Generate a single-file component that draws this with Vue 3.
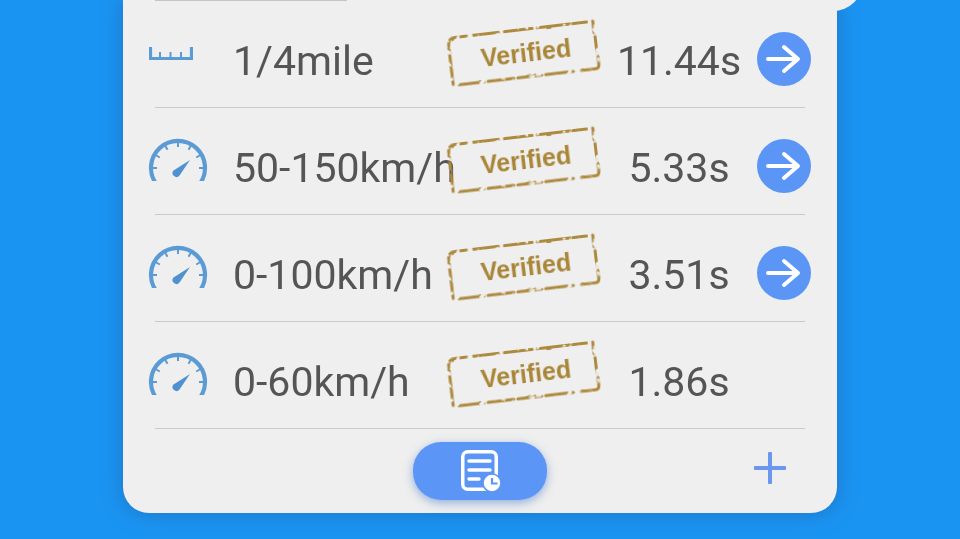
<script setup>
const rows = [
  { icon: 'ruler', label: '1/4mile', time: '11.44s', arrow: true },
  { icon: 'gauge', label: '50-150km/h', time: '5.33s', arrow: true },
  { icon: 'gauge', label: '0-100km/h', time: '3.51s', arrow: true },
  { icon: 'gauge', label: '0-60km/h', time: '1.86s', arrow: false },
]
const ticks = [-90, -60, -30, 0, 30, 60, 90]
</script>

<template>
  <div class="screen">
    <div class="card">
      <div class="top-line"></div>
      <div class="notch"></div>
      <div v-for="row in rows" :key="row.label" class="row">
        <div class="icon-cell">
          <svg v-if="row.icon === 'ruler'" class="ruler" width="44" height="14" viewBox="0 0 44 14">
            <path d="M1.500 0V11.500H42.500V0" fill="none" stroke="#5b9bd5" stroke-width="3.200" />
            <path d="M11 5V11M21.500 5V11M32 5V11" fill="none" stroke="#5b9bd5" stroke-width="2" />
          </svg>
          <svg v-else class="gauge" width="60" height="44" viewBox="0 0 60 44">
            <path d="M8.300 47A27 27 0 1 1 51.700 47" fill="none" stroke="#5b9bd5" stroke-width="4.200" />
            <g stroke="#5b9bd5" stroke-width="2">
              <line v-for="a in ticks" :key="a" x1="30" y1="5" x2="30" y2="10" :transform="`rotate(${a} 30 31)`" />
            </g>
            <path d="M25.500 33.500L42 23L31.500 38.500A3.800 3.800 0 0 1 25.500 33.500Z" fill="#4f92cf" />
          </svg>
        </div>
        <div class="label">{{ row.label }}</div>
        <svg class="stamp" width="158" height="72" viewBox="0 0 158 72">
          <defs>
            <filter id="worn" x="-5%" y="-10%" width="110%" height="120%" color-interpolation-filters="sRGB">
              <feTurbulence type="fractalNoise" baseFrequency="0.16" numOctaves="2" seed="4" result="n" />
              <feDisplacementMap in="SourceGraphic" in2="n" scale="2" xChannelSelector="R" yChannelSelector="G" result="d" />
              <feColorMatrix in="n" type="matrix" values="0 0 0 0 0  0 0 0 0 0  0 0 0 0 0  7 0 0 0 -1.900" result="t" />
              <feComposite in="d" in2="t" operator="in" />
            </filter>
            <filter id="rough" x="-5%" y="-10%" width="110%" height="120%" color-interpolation-filters="sRGB">
              <feTurbulence type="fractalNoise" baseFrequency="0.35" numOctaves="1" seed="7" result="n" />
              <feDisplacementMap in="SourceGraphic" in2="n" scale="1.200" xChannelSelector="R" yChannelSelector="G" />
            </filter>
          </defs>
          <g transform="rotate(-6.700 79 36)">
            <g fill="none" stroke="#ad8a3e" stroke-width="3" stroke-linecap="round" filter="url(#worn)">
              <path d="M5 20Q5 12.500 13 12.500H24M30 12.500H56M62 12.500H90M95 12.500H128M131 12.500H145" />
              <path d="M151 12V24M151.500 28V45M152 48V56Q152 60 148 60H134" />
              <path d="M126 60H98M94 60H70M66 60H40M36 60H12" />
              <path d="M5 22V59" />
            </g>
            <text x="81" y="45" text-anchor="middle" class="stamp-text" filter="url(#rough)">Verified</text>
          </g>
        </svg>
        <div class="time">{{ row.time }}</div>
        <div class="arrow-cell">
          <svg v-if="row.arrow" width="54" height="54" viewBox="0 0 54 54">
            <circle cx="27" cy="27" r="27" fill="#5b95f5" />
            <path d="M11 27H40M27 15L41 27L27 39" fill="none" stroke="#fff" stroke-width="4" stroke-linecap="round" stroke-linejoin="round" />
          </svg>
        </div>
      </div>
      <div class="footer">
        <div class="report-btn">
          <svg width="44" height="48" viewBox="0 0 44 48">
            <rect x="4.750" y="4.750" width="33.500" height="37.500" rx="5" fill="none" stroke="#fff" stroke-width="3.500" />
            <path d="M11 14H32M11 23H32M11 32H21" stroke="#fff" stroke-width="3.500" stroke-linecap="round" />
            <circle cx="34" cy="36" r="9" fill="#fff" stroke="#5b95f5" stroke-width="1.500" />
            <path d="M34 31V36.500H39.500" fill="none" stroke="#5b95f5" stroke-width="2.200" />
          </svg>
        </div>
        <svg class="plus" width="32" height="32" viewBox="0 0 32 32">
          <path d="M16 1.500V30.500M1.500 16H30.500" stroke="#6a98ee" stroke-width="4" stroke-linecap="round" />
        </svg>
      </div>
    </div>
  </div>
</template>

<style scoped>
.screen {
  width: 960px;
  height: 539px;
  overflow: hidden;
  background: #1a94f2;
  display: flex;
  justify-content: center;
  align-items: flex-start;
  font-family: Roboto, "Liberation Sans", sans-serif;
}
.card {
  position: relative;
  width: 714px;
  height: 513px;
  box-sizing: border-box;
  padding: 1px 32px 0;
  background: #efefef;
  border-radius: 0 0 26px 26px;
  box-shadow: 0 0 20px rgba(40, 85, 150, 0.5);
  filter: blur(0.4px);
}
.top-line {
  position: absolute;
  left: 32px;
  top: 0;
  width: 192px;
  height: 1px;
  background: #c4c4c4;
}
.notch {
  position: absolute;
  right: -26px;
  top: -30px;
  width: 62px;
  height: 41px;
  border-radius: 0 0 30px 10px;
  background: #efefef;
}
.row {
  height: 95px;
  padding-top: 11px;
  border-bottom: 1px solid #c9c9c9;
  display: flex;
  align-items: center;
  position: relative;
}
.icon-cell {
  width: 84px;
  margin-left: -6px;
  flex: none;
  display: flex;
}
.ruler {
  margin-bottom: 11px;
}
.gauge {
  margin-left: -1px;
  margin-bottom: 16px;
}
.label {
  flex: none;
  width: 214px;
  font-size: 41px;
  color: #555;
  white-space: nowrap;
  margin-top: 3px;
}
.stamp {
  position: absolute;
  left: 290px;
  top: 16px;
}
.stamp-text {
  font-family: "Liberation Sans", sans-serif;
  font-size: 25px;
  font-weight: 700;
  fill: #a98637;
}
.time {
  position: absolute;
  left: 424px;
  width: 200px;
  text-align: center;
  font-size: 41px;
  color: #555;
  margin-top: 3px;
}
.arrow-cell {
  position: absolute;
  left: 602px;
  width: 54px;
  height: 54px;
  margin-bottom: 2px;
  display: flex;
}
.footer {
  height: 84px;
  position: relative;
  display: flex;
  justify-content: center;
  align-items: flex-start;
  padding-top: 13px;
}
.report-btn {
  width: 134px;
  height: 58px;
  border-radius: 28px;
  background: #5b95f5;
  box-shadow: 0 3px 10px rgba(60, 110, 200, 0.5);
  display: flex;
  align-items: center;
  justify-content: center;
}
.plus {
  position: absolute;
  left: 599px;
  top: 23px;
}
</style>
